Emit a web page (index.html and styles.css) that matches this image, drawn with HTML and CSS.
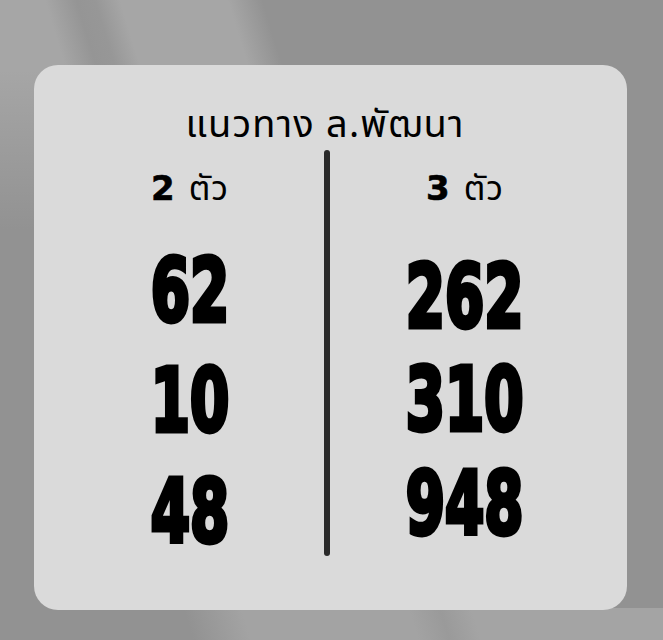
FILE: index.html
```html
<!DOCTYPE html>
<html lang="th">
<head>
<meta charset="utf-8">
<title>แนวทาง ล.พัฒนา</title>
<link rel="stylesheet" href="styles.css">
</head>
<body>
<div class="card">
  <div class="title">แนวทาง ล.พัฒนา</div>
  <div class="cols">
    <div class="col col-left">
      <div class="head"><span class="digit">2</span><span class="unit">ตัว</span></div>
      <div class="nums nums-left">
        <div class="num"><span>62</span></div>
        <div class="num"><span>10</span></div>
        <div class="num"><span>48</span></div>
      </div>
    </div>
    <div class="divider"></div>
    <div class="col col-right">
      <div class="head"><span class="digit">3</span><span class="unit">ตัว</span></div>
      <div class="nums nums-right">
        <div class="num"><span>262</span></div>
        <div class="num"><span>310</span></div>
        <div class="num"><span>948</span></div>
      </div>
    </div>
  </div>
</div>
</body>
</html>
```
FILE: styles.css
```css
html, body {
  margin: 0;
  padding: 0;
}
body {
  width: 663px;
  height: 640px;
  overflow: hidden;
  background-color: #929292;
  background-image:
    linear-gradient(180deg, rgba(146,146,146,0) 0px, rgba(146,146,146,0) 70px, rgba(146,146,146,1) 230px),
    linear-gradient(73deg, #a6a6a6 0px, #a6a6a6 110px, #959595 140px, #979797 158px, #a6a6a6 182px, #a6a6a6 285px, #929292 318px),
    linear-gradient(73deg, #929292 0px, #929292 185px, #a3a3a3 240px, #a3a3a3 400px, #9a9a9a 430px, #a4a4a4 460px, #a4a4a4 663px);
  background-repeat: no-repeat;
  background-size: 663px 230px, 663px 230px, 663px 32px;
  background-position: 0 0, 0 0, 0 608px;
  font-family: "Noto Sans Thai", "Loma", "Garuda", "Tahoma", "DejaVu Sans", sans-serif;
  color: #000;
  padding-top: 65px;
  box-sizing: border-box;
}
.card {
  margin-left: 34px;
  width: 593px;
  height: 545px;
  box-sizing: border-box;
  background: #dadada;
  border-radius: 24px;
  padding: 40px 27px 54px 22px;
  display: flex;
  flex-direction: column;
}
.title {
  text-align: center;
  font-size: 38px;
  letter-spacing: 1.2px;
  line-height: 42px;
  height: 42px;
  margin-bottom: 3px;
  margin-left: -6px;
}
.cols {
  display: grid;
  grid-template-columns: 268px 6px 1fr;
  height: 406px;
}
.col {
  display: flex;
  flex-direction: column;
  align-items: center;
}
.divider {
  background: #2a2a2a;
  border-radius: 3px;
}
.head {
  margin-top: 20px;
  height: 36px;
  line-height: 36px;
  font-size: 34px;
  display: flex;
  align-items: baseline;
}
.digit {
  font-family: "DejaVu Sans", sans-serif;
  font-weight: 700;
  -webkit-text-stroke: 0.6px #000;
  margin-right: 14px;
}
.unit {
  letter-spacing: 1px;
}
.nums {
  display: flex;
  flex-direction: column;
  align-items: center;
}
.nums-left {
  margin-top: 49px;
  gap: 41px;
}
.nums-right {
  margin-top: 55px;
  gap: 34px;
}
.num {
  height: 70px;
  line-height: 70px;
  font-family: "DejaVu Sans Condensed", "DejaVu Sans", sans-serif;
  font-weight: 700;
  font-size: 72px;
}
.num span {
  display: inline-block;
  transform: scale(0.87, 1.22);
  -webkit-text-stroke: 4px #000;
}
```
